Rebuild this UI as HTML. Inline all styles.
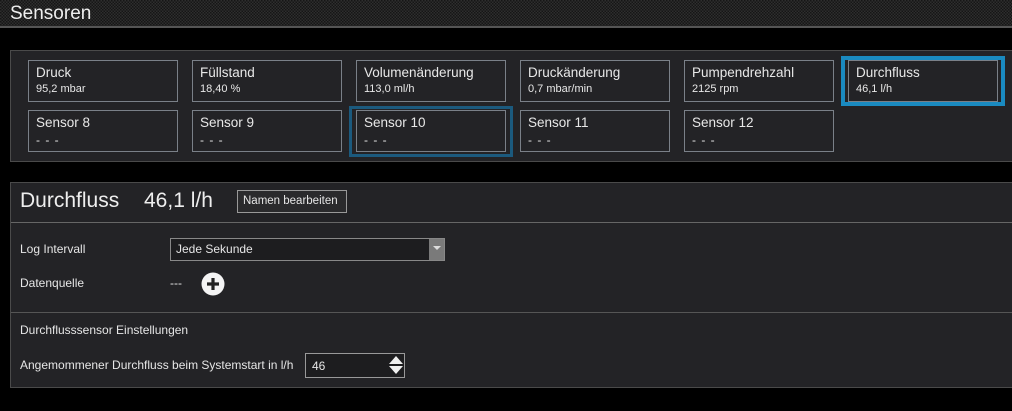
<!DOCTYPE html>
<html><head><meta charset="utf-8"><style>
*{margin:0;padding:0;box-sizing:border-box}
body{width:1012px;height:411px;background:#000;font-family:"Liberation Sans",sans-serif;color:#e6e6e6;position:relative;overflow:hidden}
.top{position:absolute;left:0;top:0;width:1012px;height:28px;background-color:#1c1c1c;background-image:repeating-conic-gradient(#2e2e2e 0 25%,#161616 0 50%);background-size:3px 3px;border-bottom:2px solid #555}
.top span{position:absolute;left:10px;top:3px;font-size:19px;color:#eee}
.panel{position:absolute;left:10px;background:#232326;border:1px solid #4a4a4a;border-right:none}
.tile{position:absolute;width:150px;height:42px;border:1px solid #7a8088;background:#232326}
.tile .a{position:absolute;left:7px;top:4px;font-size:13.5px;color:#e8e8e8}
.tile .b{position:absolute;left:7px;top:22px;font-size:11px;color:#e8e8e8}
.tile.s .b{top:22px;font-size:12px;letter-spacing:1px}
.sel{position:absolute;border:4px solid #1a8ac0}
.sel2{position:absolute;border:3px solid #1b5a7e}
.lbl{position:absolute;font-size:12px;color:#e6e6e6}
</style></head><body>
<div class="top"><span>Sensoren</span></div>
<div class="panel" style="top:50px;width:1002px;height:112px"></div>
<div class="sel" style="left:841px;top:56px;width:164px;height:50px"></div>
<div class="sel2" style="left:349px;top:106px;width:164px;height:51px"></div>
<div class="tile" style="left:28px;top:60px"><div class="a">Druck</div><div class="b">95,2 mbar</div></div>
<div class="tile" style="left:192px;top:60px"><div class="a">Füllstand</div><div class="b">18,40 %</div></div>
<div class="tile" style="left:356px;top:60px"><div class="a">Volumenänderung</div><div class="b">113,0 ml/h</div></div>
<div class="tile" style="left:520px;top:60px"><div class="a">Druckänderung</div><div class="b">0,7 mbar/min</div></div>
<div class="tile" style="left:684px;top:60px"><div class="a">Pumpendrehzahl</div><div class="b">2125 rpm</div></div>
<div class="tile" style="left:848px;top:60px;border-color:#7a8088"><div class="a">Durchfluss</div><div class="b">46,1 l/h</div></div>
<div class="tile s" style="left:28px;top:110px"><div class="a">Sensor 8</div><div class="b">- - -</div></div>
<div class="tile s" style="left:192px;top:110px"><div class="a">Sensor 9</div><div class="b">- - -</div></div>
<div class="tile s" style="left:356px;top:110px"><div class="a">Sensor 10</div><div class="b">- - -</div></div>
<div class="tile s" style="left:520px;top:110px"><div class="a">Sensor 11</div><div class="b">- - -</div></div>
<div class="tile s" style="left:684px;top:110px"><div class="a">Sensor 12</div><div class="b">- - -</div></div>

<div class="panel" style="top:182px;width:1002px;height:206px"></div>
<div class="lbl" style="left:20px;top:189px;font-size:21px;color:#eee">Durchfluss</div>
<div class="lbl" style="left:144px;top:189px;font-size:21px;color:#eee">46,1 l/h</div>
<div style="position:absolute;left:237px;top:190px;width:110px;height:23px;border:1px solid #999;background:#2a2a2c"></div>
<div class="lbl" style="left:243px;top:195px;font-size:11.5px">Namen bearbeiten</div>
<div style="position:absolute;left:11px;top:222px;width:1001px;height:1px;background:#666"></div>
<div class="lbl" style="left:20px;top:242px">Log Intervall</div>
<div style="position:absolute;left:170px;top:238px;width:275px;height:23px;border:1px solid #888;background:#1d1d1f"></div>
<div style="position:absolute;left:429px;top:239px;width:15px;height:21px;background:#7a7a7a"></div>
<div style="position:absolute;left:433px;top:246px;border-left:4px solid transparent;border-right:4px solid transparent;border-top:4px solid #ddd"></div>
<div class="lbl" style="left:176px;top:242px">Jede Sekunde</div>
<div class="lbl" style="left:20px;top:276px">Datenquelle</div>
<div class="lbl" style="left:170px;top:276px">---</div>
<svg style="position:absolute;left:201px;top:272px" width="24" height="24" viewBox="0 0 24 24"><circle cx="12" cy="12" r="11.5" fill="#f4f4f4"/><path d="M12 6v12M6 12h12" stroke="#222" stroke-width="3.2"/></svg>
<div style="position:absolute;left:11px;top:312px;width:1001px;height:1px;background:#555"></div>
<div class="lbl" style="left:20px;top:323px">Durchflusssensor Einstellungen</div>
<div class="lbl" style="left:20px;top:358px">Angemommener Durchfluss beim Systemstart in l/h</div>
<div style="position:absolute;left:305px;top:353px;width:100px;height:25px;border:1px solid #999;background:#1d1d1f"></div>
<div class="lbl" style="left:312px;top:359px">46</div>
<div style="position:absolute;left:389px;top:356px;border-left:7px solid transparent;border-right:7px solid transparent;border-bottom:8px solid #f0f0f0"></div>
<div style="position:absolute;left:389px;top:366px;border-left:7px solid transparent;border-right:7px solid transparent;border-top:8px solid #f0f0f0"></div>
</body></html>
